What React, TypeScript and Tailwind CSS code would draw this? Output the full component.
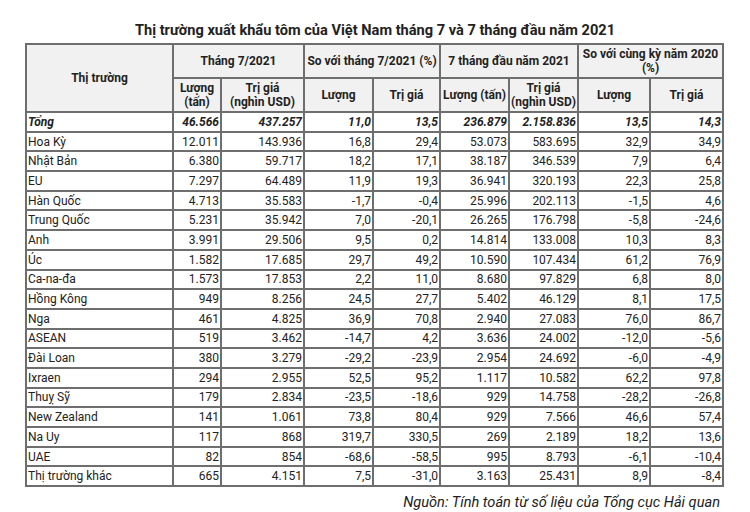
import React from "react";

type Row = [string, string, string, string, string, string, string, string, string];

const rows: Row[] = [
  ["Hoa Kỳ", "12.011", "143.936", "16,8", "29,4", "53.073", "583.695", "32,9", "34,9"],
  ["Nhật Bản", "6.380", "59.717", "18,2", "17,1", "38.187", "346.539", "7,9", "6,4"],
  ["EU", "7.297", "64.489", "11,9", "19,3", "36.941", "320.193", "22,3", "25,8"],
  ["Hàn Quốc", "4.713", "35.583", "-1,7", "-0,4", "25.996", "202.113", "-1,5", "4,6"],
  ["Trung Quốc", "5.231", "35.942", "7,0", "-20,1", "26.265", "176.798", "-5,8", "-24,6"],
  ["Anh", "3.991", "29.506", "9,5", "0,2", "14.814", "133.008", "10,3", "8,3"],
  ["Úc", "1.582", "17.685", "29,7", "49,2", "10.590", "107.434", "61,2", "76,9"],
  ["Ca-na-đa", "1.573", "17.853", "2,2", "11,0", "8.680", "97.829", "6,8", "8,0"],
  ["Hồng Kông", "949", "8.256", "24,5", "27,7", "5.402", "46.129", "8,1", "17,5"],
  ["Nga", "461", "4.825", "36,9", "70,8", "2.940", "27.083", "76,0", "86,7"],
  ["ASEAN", "519", "3.462", "-14,7", "4,2", "3.636", "24.002", "-12,0", "-5,6"],
  ["Đài Loan", "380", "3.279", "-29,2", "-23,9", "2.954", "24.692", "-6,0", "-4,9"],
  ["Ixraen", "294", "2.955", "52,5", "95,2", "1.117", "10.582", "62,2", "97,8"],
  ["Thuỵ Sỹ", "179", "2.834", "-23,5", "-18,6", "929", "14.758", "-28,2", "-26,8"],
  ["New Zealand", "141", "1.061", "73,8", "80,4", "929", "7.566", "46,6", "57,4"],
  ["Na Uy", "117", "868", "319,7", "330,5", "269", "2.189", "18,2", "13,6"],
  ["UAE", "82", "854", "-68,6", "-58,5", "995", "8.793", "-6,1", "-10,4"],
  ["Thị trường khác", "665", "4.151", "7,5", "-31,0", "3.163", "25.431", "8,9", "-8,4"],
];

const total: Row = ["Tổng", "46.566", "437.257", "11,0", "13,5", "236.879", "2.158.836", "13,5", "14,3"];

const widths = [147, 48, 83, 69, 67, 69, 69, 72, 73];

const hc = "border-2 border-[#6e6e6e] bg-[#f1f1f1] text-center font-bold text-[12px] leading-[14px] text-[#222] p-0";
const dc = "border-2 border-[#6e6e6e] text-[12px] leading-[14px] text-[#222] p-0";

export default function App() {
  return (
    <div
      className="w-[750px] h-[512px] bg-white overflow-hidden"
      style={{ fontFamily: "Roboto, 'Noto Sans', sans-serif" }}
    >
      <div className="pt-[21px] h-[43px] text-center font-bold text-[14.6px] leading-[18px] text-[#222]">
        Thị trường xuất khẩu tôm của Việt Nam tháng 7 và 7 tháng đầu năm 2021
      </div>
      <div className="pl-[25px]">
        <table className="table-fixed border-collapse border-2 border-[#3a3a3a] w-[697px]">
          <colgroup>
            {widths.map((w, i) => (
              <col key={i} style={{ width: w }} />
            ))}
          </colgroup>
          <thead>
            <tr className="h-[34px]">
              <th rowSpan={2} className={hc}>Thị trường</th>
              <th colSpan={2} className={hc}>Tháng 7/2021</th>
              <th colSpan={2} className={hc}>So với tháng 7/2021 (%)</th>
              <th colSpan={2} className={hc}>7 tháng đầu năm 2021</th>
              <th colSpan={2} className={hc}>
                So với cùng kỳ năm 2020
                <br />
                (%)
              </th>
            </tr>
            <tr className="h-[34px]">
              <th className={hc}>
                Lượng
                <br />
                (tấn)
              </th>
              <th className={hc}>
                Trị giá
                <br />
                (nghìn USD)
              </th>
              <th className={hc}>Lượng</th>
              <th className={hc}>Trị giá</th>
              <th className={hc}>Lượng (tấn)</th>
              <th className={hc}>
                Trị giá
                <br />
                (nghìn USD)
              </th>
              <th className={hc}>Lượng</th>
              <th className={hc}>Trị giá</th>
            </tr>
          </thead>
          <tbody>
            <tr className="h-[19.7px]">
              {total.map((v, i) => (
                <td
                  key={i}
                  className={`${dc} font-bold italic ${i === 0 ? "text-left pl-[1px]" : "text-right pr-[1px]"}`}
                >
                  {v}
                </td>
              ))}
            </tr>
            {rows.map((r, ri) => (
              <tr key={ri} className="h-[19.7px]">
                {r.map((v, i) => (
                  <td
                    key={i}
                    className={`${dc} ${i === 0 ? "text-left pl-[1px]" : "text-right pr-[1px]"}`}
                  >
                    {v}
                  </td>
                ))}
              </tr>
            ))}
          </tbody>
        </table>
      </div>
      <div className="w-[720px] text-right italic text-[14.6px] leading-[18px] text-[#222] mt-[6px]">
        Nguồn: Tính toán từ số liệu của Tổng cục Hải quan
      </div>
    </div>
  );
}
